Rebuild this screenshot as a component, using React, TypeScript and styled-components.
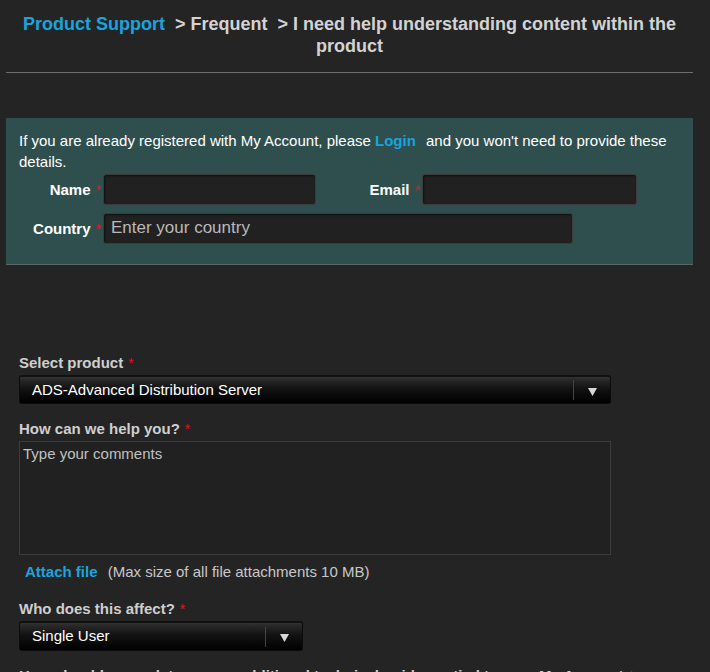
import React from "react";
import styled, { createGlobalStyle } from "styled-components";

const Global = createGlobalStyle`
  html, body { margin: 0; padding: 0; background: #242424; }
  body { font-family: "Liberation Sans", Arial, sans-serif; }
  * { box-sizing: border-box; }
`;

const Page = styled.div`
  width: 687px;
  margin-left: 6px;
  padding-top: 13px;
  height: 672px;
  overflow: hidden;
`;

const Breadcrumb = styled.h1`
  margin: 0;
  padding: 0 12px;
  text-align: center;
  font-size: 18px;
  line-height: 22px;
  font-weight: bold;
  color: #d3d3d3;
`;

const Crumb = styled.span<{ $link?: boolean; $gap?: boolean }>`
  color: ${(p) => (p.$link ? "#1aa3de" : "#d3d3d3")};
  margin-right: ${(p) => (p.$gap ? "10px" : "0")};
`;

const Rule = styled.hr`
  margin: 15px 0 0;
  border: 0;
  border-top: 1px solid #6e6e6e;
  height: 0;
`;

const LoginBox = styled.section`
  margin-top: 45px;
  background: #2f4f4f;
  border-bottom: 1px solid #5a6565;
  padding: 12px 13px 20px;
  color: #ffffff;
  font-size: 15px;
`;

const Intro = styled.p`
  margin: 0;
  line-height: 21px;
`;

const Link = styled.a`
  color: #1aa3de;
  font-weight: bold;
  text-decoration: none;
  margin-right: 6px;
`;

const FieldRow = styled.div`
  display: flex;
  align-items: center;
  margin-top: 8px;
  &:first-of-type { margin-top: 2px; }
`;

const LabelCell = styled.label<{ $w: number }>`
  width: ${(p) => p.$w}px;
  flex: none;
  text-align: right;
  padding-right: 2px;
  font-weight: bold;
  font-size: 15px;
  color: #ffffff;
`;

const Star = styled.span`
  color: #e0141e;
  font-weight: normal;
  margin-left: 5px;
  font-size: 14px;
`;

const TextInput = styled.div<{ $w: number }>`
  width: ${(p) => p.$w}px;
  height: 31px;
  background: #212121;
  border: 1px solid #3b3b3b;
  border-radius: 3px;
  box-shadow: inset 1px 1px 2px #111;
  color: #b9b9b9;
  font-size: 17px;
  line-height: 27px;
  padding-left: 7px;
`;

const Form = styled.div`
  padding: 89px 0 0 13px;
`;

const FormLabel = styled.div`
  font-weight: bold;
  font-size: 15px;
  color: #cfcfcf;
  line-height: 17px;
  margin-bottom: 3px;
`;

const SelectBox = styled.div<{ $w: number; $mb: number; $h: number }>`
  width: ${(p) => p.$w}px;
  height: ${(p) => p.$h}px;
  display: flex;
  align-items: center;
  background: linear-gradient(#333 0, #2a2a2a 2px, #121212 45%, #000 100%);
  border: 1px solid #0c0c0c;
  border-top: 2px solid #111;
  border-radius: 3px;
  color: #ffffff;
  font-size: 15px;
  padding-left: 12px;
  margin-bottom: ${(p) => p.$mb}px;
`;

const SelectText = styled.span`
  flex: 1;
  padding-bottom: 2px;
`;

const SelectSep = styled.span`
  width: 1px;
  height: 20px;
  background: #444;
`;

const Arrow = styled.span`
  width: 36px;
  display: flex;
  justify-content: center;
  padding-top: 3px;
`;

const TextArea = styled.div`
  width: 592px;
  height: 114px;
  background: #212121;
  border: 1px solid #3c3c3c;
  color: #c0c0c0;
  font-size: 15px;
  padding: 3px 3px;
`;

const AttachRow = styled.div`
  padding: 8px 0 0 6px;
  font-size: 15px;
  line-height: 17px;
  color: #c8c8c8;
  margin-bottom: 20px;
`;

const Question = styled.div`
  font-weight: bold;
  font-size: 15px;
  line-height: 17px;
  color: #cfcfcf;
  white-space: nowrap;
`;

const Caret = () => (
  <svg width="9" height="8" viewBox="0 0 9 8">
    <path d="M0 0 H9 L4.5 8 Z" fill="#d8d8d8" />
  </svg>
);

export default function App() {
  return (
    <>
      <Global />
      <Page>
        <Breadcrumb>
          <Crumb $link $gap>Product Support</Crumb>
          <Crumb $gap>&gt; Frequent</Crumb>
          <Crumb>&gt; I need help understanding content within the product</Crumb>
        </Breadcrumb>
        <Rule />
        <LoginBox>
          <Intro>
            If you are already registered with My Account, please <Link>Login</Link> and you won't need to provide these details.
          </Intro>
          <FieldRow>
            <LabelCell $w={84}>Name<Star>*</Star></LabelCell>
            <TextInput $w={213} />
            <LabelCell $w={106}>Email<Star>*</Star></LabelCell>
            <TextInput $w={215} />
          </FieldRow>
          <FieldRow>
            <LabelCell $w={84}>Country<Star>*</Star></LabelCell>
            <TextInput $w={470}>Enter your country</TextInput>
          </FieldRow>
        </LoginBox>
        <Form>
          <FormLabel>Select product<Star>*</Star></FormLabel>
          <SelectBox $w={592} $h={29} $mb={16}>
            <SelectText>ADS-Advanced Distribution Server</SelectText>
            <SelectSep />
            <Arrow><Caret /></Arrow>
          </SelectBox>
          <FormLabel>How can we help you?<Star>*</Star></FormLabel>
          <TextArea>Type your comments</TextArea>
          <AttachRow>
            <Link>Attach file</Link> (Max size of all file attachments 10 MB)
          </AttachRow>
          <FormLabel>Who does this affect?<Star>*</Star></FormLabel>
          <SelectBox $w={284} $h={30} $mb={16}>
            <SelectText>Single User</SelectText>
            <SelectSep />
            <Arrow><Caret /></Arrow>
          </SelectBox>
          <Question>
            How should we update you on additional technical guidance tied to your My Account<Star>*</Star>
          </Question>
        </Form>
      </Page>
    </>
  );
}
